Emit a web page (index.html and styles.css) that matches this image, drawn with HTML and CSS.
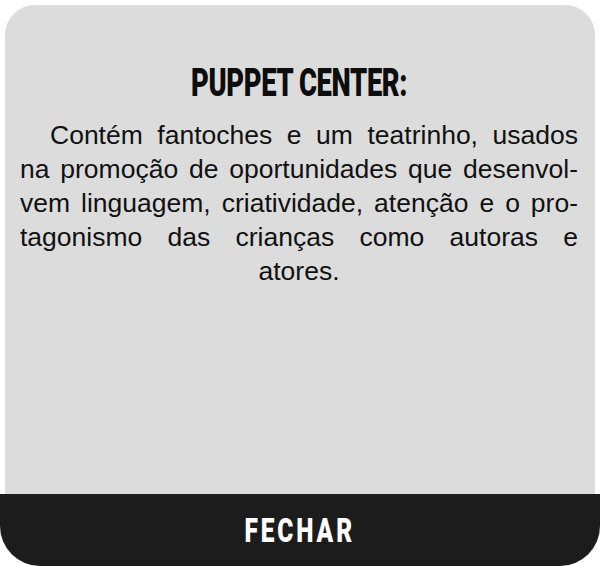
FILE: index.html
```html
<!DOCTYPE html>
<html lang="pt">
<head>
<meta charset="utf-8">
<link rel="stylesheet" href="styles.css">
</head>
<body>
<div class="modal">
  <div class="panel">
    <h1 class="title"><span class="title-text">PUPPET CENTER:</span></h1>
    <div class="desc">
      <span class="line first">Contém fantoches e um teatrinho, usados</span>
      <span class="line">na promoção de oportunidades que desenvol-</span>
      <span class="line">vem linguagem, criatividade, atenção e o pro-</span>
      <span class="line">tagonismo das crianças como autoras e</span>
      <span class="line last">atores.</span>
    </div>
  </div>
  <div class="footer"><span class="close">FECHAR</span></div>
</div>
</body>
</html>
```
FILE: styles.css
```css
html, body {
  margin: 0;
  padding: 0;
  background: #ffffff;
}
.modal {
  width: 600px;
  height: 566px;
  display: flex;
  flex-direction: column;
}
.panel {
  margin: 5px 5px 0 5px;
  height: 489px;
  background: #dcdcdc;
  border-radius: 30px 30px 0 0;
  box-sizing: border-box;
  padding: 60px 17px 0 15px;
}
.title {
  margin: 0;
  text-align: center;
  font-family: Roboto, "Liberation Sans", sans-serif;
  font-weight: 900;
  font-size: 38px;
  line-height: 36px;
  color: #0d0d0d;
}
.title-text {
  display: inline-block;
  transform: scaleX(0.72);
  letter-spacing: -0.5px;
}
.desc {
  margin-top: 17px;
  font-family: "Liberation Sans", Arial, sans-serif;
  font-size: 26.5px;
  line-height: 34px;
  color: #111111;
}
.line {
  display: block;
  text-align: justify;
  text-align-last: justify;
  white-space: nowrap;
}
.line.first {
  text-indent: 30px;
}
.line.last {
  text-align: center;
  text-align-last: center;
}
.footer {
  height: 72px;
  background: #1c1c1c;
  border-radius: 0 0 40px 40px;
  display: flex;
  align-items: center;
  justify-content: center;
}
.close {
  display: inline-block;
  font-family: Roboto, "Liberation Sans", sans-serif;
  font-weight: 900;
  font-size: 34px;
  color: #ffffff;
  letter-spacing: 4px;
  transform: scaleX(0.72);
}
```
